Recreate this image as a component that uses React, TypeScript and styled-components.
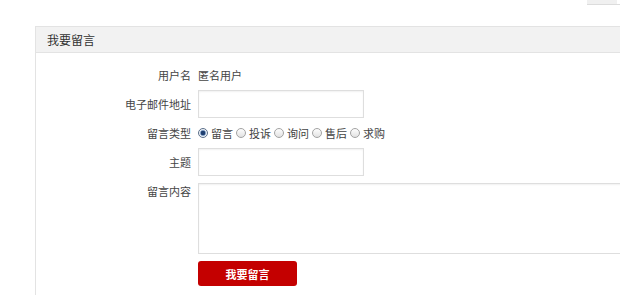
import styled, { createGlobalStyle } from 'styled-components';

const GlobalStyle = createGlobalStyle`
  html, body {
    margin: 0;
    padding: 0;
    background: #fff;
    overflow: hidden;
  }

  body {
    font-family: 'Noto Sans CJK SC', 'Noto Sans', sans-serif;
    color: #444;
  }
`;

const messageTypes = ['留言', '投诉', '询问', '售后', '求购'];

const App = () => {
  return (
    <>
      <GlobalStyle />
      <TopStrip>
        <TopTab />
      </TopStrip>
      <Panel>
        <PanelHeader>我要留言</PanelHeader>
        <Form onSubmit={(e) => e.preventDefault()}>
          <Row>
            <Label>用户名</Label>
            <Value>匿名用户</Value>
          </Row>
          <Row>
            <Label>电子邮件地址</Label>
            <TextInput type='text' />
          </Row>
          <Row>
            <Label>留言类型</Label>
            <RadioGroup>
              {messageTypes.map((type, i) => (
                <RadioOption key={type}>
                  <Radio type='radio' name='msg_type' defaultChecked={i === 0} />
                  {type}
                </RadioOption>
              ))}
            </RadioGroup>
          </Row>
          <Row>
            <Label>主题</Label>
            <TextInput type='text' />
          </Row>
          <Row $alignTop>
            <Label>留言内容</Label>
            <TextArea />
          </Row>
          <Row>
            <Label />
            <SubmitButton type='submit'>我要留言</SubmitButton>
          </Row>
        </Form>
      </Panel>
    </>
  );
};

const TopStrip = styled.div`
  display: flex;
  justify-content: flex-end;
  height: 5px;
`;

const TopTab = styled.div`
  width: 33px;
  height: 4px;
  border-bottom: 1px solid #dcdcdc;
  background: linear-gradient(to right, #f0f0f0 30px, transparent 30px);
`;

const Panel = styled.div`
  width: 600px;
  height: 269px;
  margin: 21px 0 0 35px;
  border: 1px solid #e3e3e3;
  border-bottom: none;
  overflow: hidden;
`;

const PanelHeader = styled.div`
  height: 25px;
  padding-left: 11px;
  line-height: 25px;
  font-size: 12px;
  color: #333;
  background: #f2f2f2;
  border-bottom: 1px solid #e3e3e3;
`;

const Form = styled.form`
  display: flex;
  flex-direction: column;
  gap: 7px;
  padding-top: 14px;
`;

const Row = styled.div<{ $alignTop?: boolean }>`
  display: flex;
  align-items: ${({ $alignTop }) => ($alignTop ? 'flex-start' : 'center')};
`;

const Label = styled.label`
  flex: 0 0 155px;
  margin-right: 7px;
  text-align: right;
  font-size: 11px;
  line-height: 16px;
  color: #444;
`;

const Value = styled.span`
  font-size: 11px;
  line-height: 16px;
  color: #444;
`;

const TextInput = styled.input`
  box-sizing: border-box;
  width: 166px;
  height: 28px;
  margin: 0;
  padding: 0 6px;
  border: 1px solid #dedede;
  box-shadow: inset 0 1px 2px rgba(0, 0, 0, 0.06);
  outline: none;
`;

const TextArea = styled.textarea`
  box-sizing: border-box;
  width: 460px;
  height: 71px;
  margin: 0;
  padding: 4px 6px;
  border: 1px solid #dedede;
  box-shadow: inset 0 1px 2px rgba(0, 0, 0, 0.06);
  resize: none;
  outline: none;
`;

const RadioGroup = styled.div`
  display: flex;
  align-items: center;
  height: 12px;
`;

const RadioOption = styled.label`
  display: flex;
  align-items: center;
  height: 12px;
  margin-right: 3px;
  font-size: 11px;
  line-height: 12px;
  color: #444;
`;

const Radio = styled.input`
  appearance: none;
  box-sizing: border-box;
  width: 10px;
  height: 10px;
  margin: 0 3px 0 0;
  border: 1px solid #a3a3a3;
  border-radius: 50%;
  background: linear-gradient(#fdfdfd, #e2e2e2);

  &:checked {
    border-color: #5b6f8a;
    background: radial-gradient(circle, #1f3f70 0 2px, #7d9cc4 2.5px, #eef2f7 3.5px);
  }
`;

const SubmitButton = styled.button`
  width: 99px;
  height: 25px;
  padding: 0;
  border: none;
  border-radius: 3px;
  background: #c40000;
  color: #fff;
  font-family: 'Noto Sans CJK SC', sans-serif;
  font-size: 11px;
  font-weight: bold;
  cursor: pointer;
`;

export default App;
